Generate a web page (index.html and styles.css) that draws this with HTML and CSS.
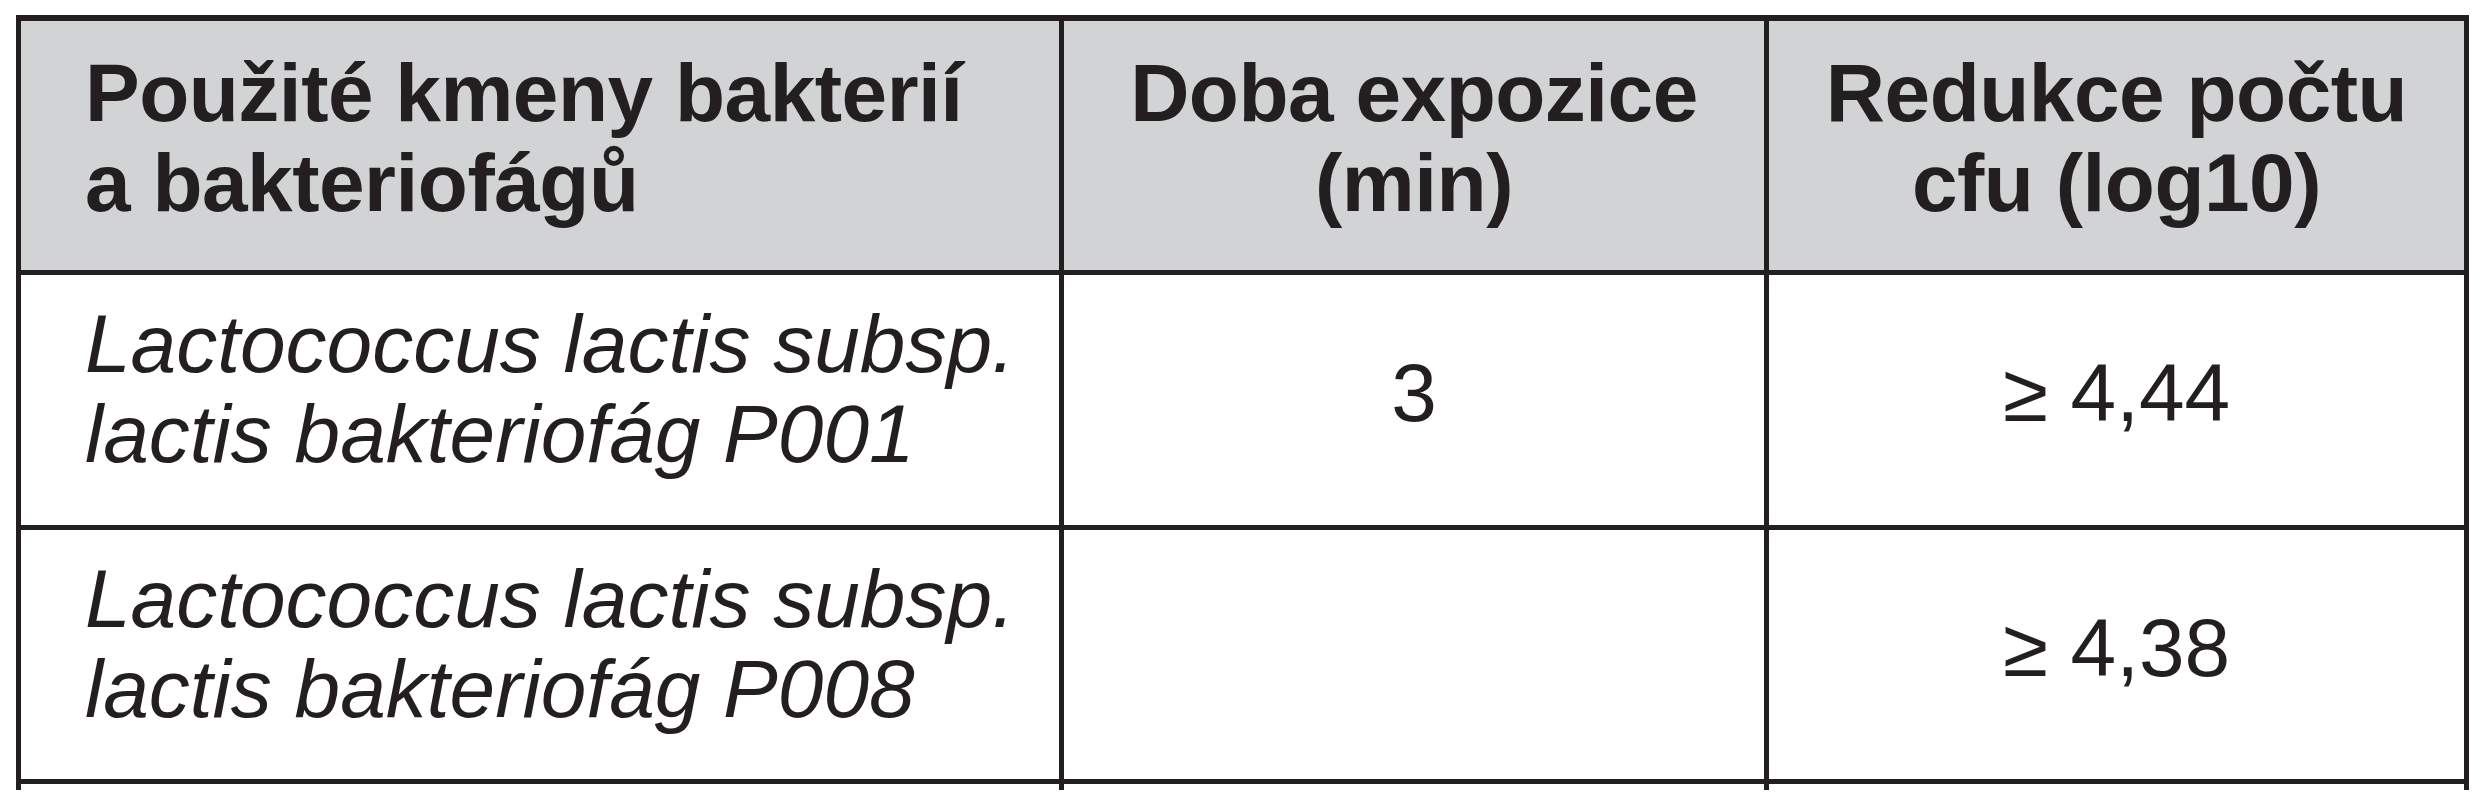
FILE: index.html
```html
<!DOCTYPE html>
<html lang="cs">
<head>
<meta charset="utf-8">
<title>Tabulka</title>
<link rel="stylesheet" href="styles.css">
</head>
<body>
<div class="table">
  <div class="cell head first">Použité kmeny bakterií<br>a bakteriofágů</div>
  <div class="cell head center">Doba expozice<br>(min)</div>
  <div class="cell head center">Redukce počtu<br>cfu (log10)</div>

  <div class="cell body first"><em>Lactococcus lactis subsp.<br>lactis bakteriofág P001</em></div>
  <div class="cell body value">3</div>
  <div class="cell body value">≥ 4,44</div>

  <div class="cell body first"><em>Lactococcus lactis subsp.<br>lactis bakteriofág P008</em></div>
  <div class="cell body value"></div>
  <div class="cell body value">≥ 4,38</div>

  <div class="tick"></div>
  <div class="tick"></div>
  <div class="tick"></div>
</div>
</body>
</html>
```

FILE: styles.css
```css
html, body {
  margin: 0;
  padding: 0;
  background: #ffffff;
}

body {
  padding: 15px 0 0 16px;
  font-family: "Liberation Sans", Arial, sans-serif;
  color: #231f20;
}

.table {
  display: grid;
  grid-template-columns: 1043px 705px 700px;
  grid-template-rows: 254px 255px 254px 6px;
  width: max-content;
  border-top: 6px solid #231f20;
  border-left: 5px solid #231f20;
  box-sizing: border-box;
}

.cell {
  box-sizing: border-box;
  border-right: 5px solid #231f20;
  border-bottom: 5px solid #231f20;
  font-size: 82px;
  line-height: 90px;
}

.head {
  background: #d1d3d4;
  font-weight: bold;
  letter-spacing: -0.5px;
  padding-top: 27px;
}

.first {
  padding-left: 64px;
  text-align: left;
}

.center {
  text-align: center;
}

.body {
  background: #ffffff;
}

.body.first {
  padding-top: 24px;
}

.body em {
  font-style: italic;
}

.value {
  display: flex;
  align-items: center;
  justify-content: center;
  padding-bottom: 14px;
}

.tick {
  box-sizing: border-box;
  border-right: 5px solid #231f20;
}
```
